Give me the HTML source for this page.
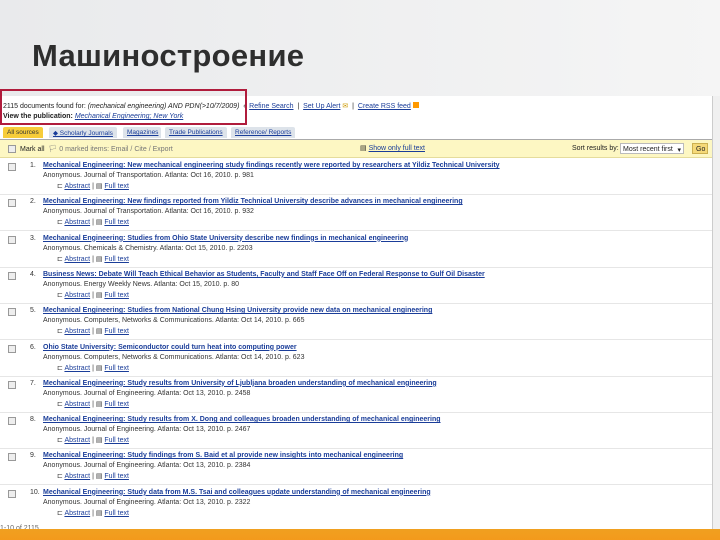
<!DOCTYPE html>
<html><head><meta charset="utf-8"><style>
*{margin:0;padding:0;box-sizing:border-box}
body{width:720px;height:540px;overflow:hidden;background:linear-gradient(90deg,#e9eaec,#f5f5f5);font-family:"Liberation Sans",sans-serif;position:relative}
.t{position:absolute;left:32px;top:38px;font-size:31px;font-weight:bold;color:#2e2e2e;letter-spacing:0.3px}
.shot{position:absolute;left:0;top:96px;width:712px;height:434px;background:#fff}
.sb{position:absolute;left:712px;top:96px;width:8px;height:434px;background:#f0f0f0;border-left:1px solid #ccc}
.red{position:absolute;left:0;top:89px;width:247px;height:36px;border:2px solid #b01c3c}
.s{position:absolute;font-size:7px;color:#222;white-space:nowrap}
a{color:#1a3d99;text-decoration:underline}
.tabs{position:absolute;top:127px;left:3px;height:11px}
.tab{position:absolute;top:0;height:11px;background:#dde3ea;font-size:6.5px;color:#1a3d99;padding:2px 4px;border-radius:2px 2px 0 0;text-decoration:underline;white-space:nowrap;overflow:hidden}
.bar{position:absolute;left:0;top:139px;width:712px;height:19px;background:#fdf7c3;border-top:1px solid #aaa;border-bottom:1px solid #e5dc9c}
.cb{position:absolute;width:8px;height:8px;border:1px solid #999;background:#eee}
.it{position:absolute;left:0;width:712px;height:36px}
.n{position:absolute;left:30px;top:0;font-size:7px;color:#333}
.ti{position:absolute;left:43px;top:0;font-size:7px;font-weight:bold;color:#1a3d99;white-space:nowrap}
.au{position:absolute;left:43px;top:10px;font-size:7px;color:#333;white-space:nowrap}
.lk{position:absolute;left:57px;top:20px;font-size:7px;white-space:nowrap;color:#333}
.orange{position:absolute;left:0;top:529px;width:720px;height:11px;background:linear-gradient(#f0a020,#f39a1c)}
</style></head><body>
<div class="t">Машиностроение</div>
<div class="shot"></div>
<div class="sb"></div>
<div class="s" style="left:3px;top:102px">2115 documents found for: <i>(mechanical engineering) AND PDN(&gt;10/7/2009)</i> &nbsp;« <a>Refine Search</a> &nbsp;| &nbsp;<a>Set Up Alert</a> <span style="color:#c90">✉</span> &nbsp;| &nbsp;<a>Create RSS feed</a> <span style="display:inline-block;width:6px;height:6px;background:#f90"></span></div>
<div class="s" style="left:3px;top:113px;font-weight:bold">View the publication: <a style="font-weight:normal;font-style:italic">Mechanical Engineering; New York</a></div>
<div class="red"></div>
<div class="tabs">
<div class="tab" style="left:0;width:40px;background:#f7cc3a;color:#333;text-decoration:none">All sources</div>
<div class="tab" style="left:46px;width:68px">◆ Scholarly Journals</div>
<div class="tab" style="left:120px;width:38px">Magazines</div>
<div class="tab" style="left:162px;width:62px">Trade Publications</div>
<div class="tab" style="left:228px;width:64px">Reference/ Reports</div>
</div>
<div class="bar">
<div class="cb" style="left:8px;top:5px"></div>
<div class="s" style="left:20px;top:5px">Mark all &nbsp;<span style="color:#777">🏳 0 marked items: Email / Cite / Export</span></div>
<div class="s" style="left:360px;top:4px">▤ <a>Show only full text</a></div>
<div class="s" style="left:572px;top:5px">Sort results by:</div>
<div class="s" style="left:620px;top:3px;width:64px;height:11px;border:1px solid #bbb;background:#fff;padding:2px">Most recent first <span style="float:right">▾</span></div>
<div class="s" style="left:692px;top:3px;width:16px;height:11px;background:#f5d978;border:1px solid #ccb050;padding:2px 3px">Go</div>
</div>
<div id="list"></div>
<div class="s" style="left:0;top:525px;color:#666">1-10 of 2115</div>
<div class="orange"></div>
<script>
const d=[
["Mechanical Engineering: New mechanical engineering study findings recently were reported by researchers at Yildiz Technical University","Anonymous. Journal of Transportation. Atlanta: Oct 16, 2010. p. 981"],
["Mechanical Engineering: New findings reported from Yildiz Technical University describe advances in mechanical engineering","Anonymous. Journal of Transportation. Atlanta: Oct 16, 2010. p. 932"],
["Mechanical Engineering: Studies from Ohio State University describe new findings in mechanical engineering","Anonymous. Chemicals &amp; Chemistry. Atlanta: Oct 15, 2010. p. 2203"],
["Business News: Debate Will Teach Ethical Behavior as Students, Faculty and Staff Face Off on Federal Response to Gulf Oil Disaster","Anonymous. Energy Weekly News. Atlanta: Oct 15, 2010. p. 80"],
["Mechanical Engineering: Studies from National Chung Hsing University provide new data on mechanical engineering","Anonymous. Computers, Networks &amp; Communications. Atlanta: Oct 14, 2010. p. 665"],
["Ohio State University: Semiconductor could turn heat into computing power","Anonymous. Computers, Networks &amp; Communications. Atlanta: Oct 14, 2010. p. 623"],
["Mechanical Engineering: Study results from University of Ljubljana broaden understanding of mechanical engineering","Anonymous. Journal of Engineering. Atlanta: Oct 13, 2010. p. 2458"],
["Mechanical Engineering: Study results from X. Dong and colleagues broaden understanding of mechanical engineering","Anonymous. Journal of Engineering. Atlanta: Oct 13, 2010. p. 2467"],
["Mechanical Engineering: Study findings from S. Baid et al provide new insights into mechanical engineering","Anonymous. Journal of Engineering. Atlanta: Oct 13, 2010. p. 2384"],
["Mechanical Engineering: Study data from M.S. Tsai and colleagues update understanding of mechanical engineering","Anonymous. Journal of Engineering. Atlanta: Oct 13, 2010. p. 2322"]];
let h="";d.forEach((x,i)=>{const y=162+i*36.3;h+=`<div class="it" style="top:${y}px"><div class="cb" style="left:8px;top:1px"></div><div class="n">${i+1}.</div><div class="ti" style="text-decoration:underline">${x[0]}</div><div class="au">${x[1]}</div><div class="lk">⊏ <a>Abstract</a> | ▤ <a>Full text</a></div></div>`;if(i<9)h+=`<div style="position:absolute;left:0;top:${y+32}px;width:712px;height:1px;background:#e6e6e6"></div>`});
document.getElementById("list").innerHTML=h;
</script>
</body></html>
